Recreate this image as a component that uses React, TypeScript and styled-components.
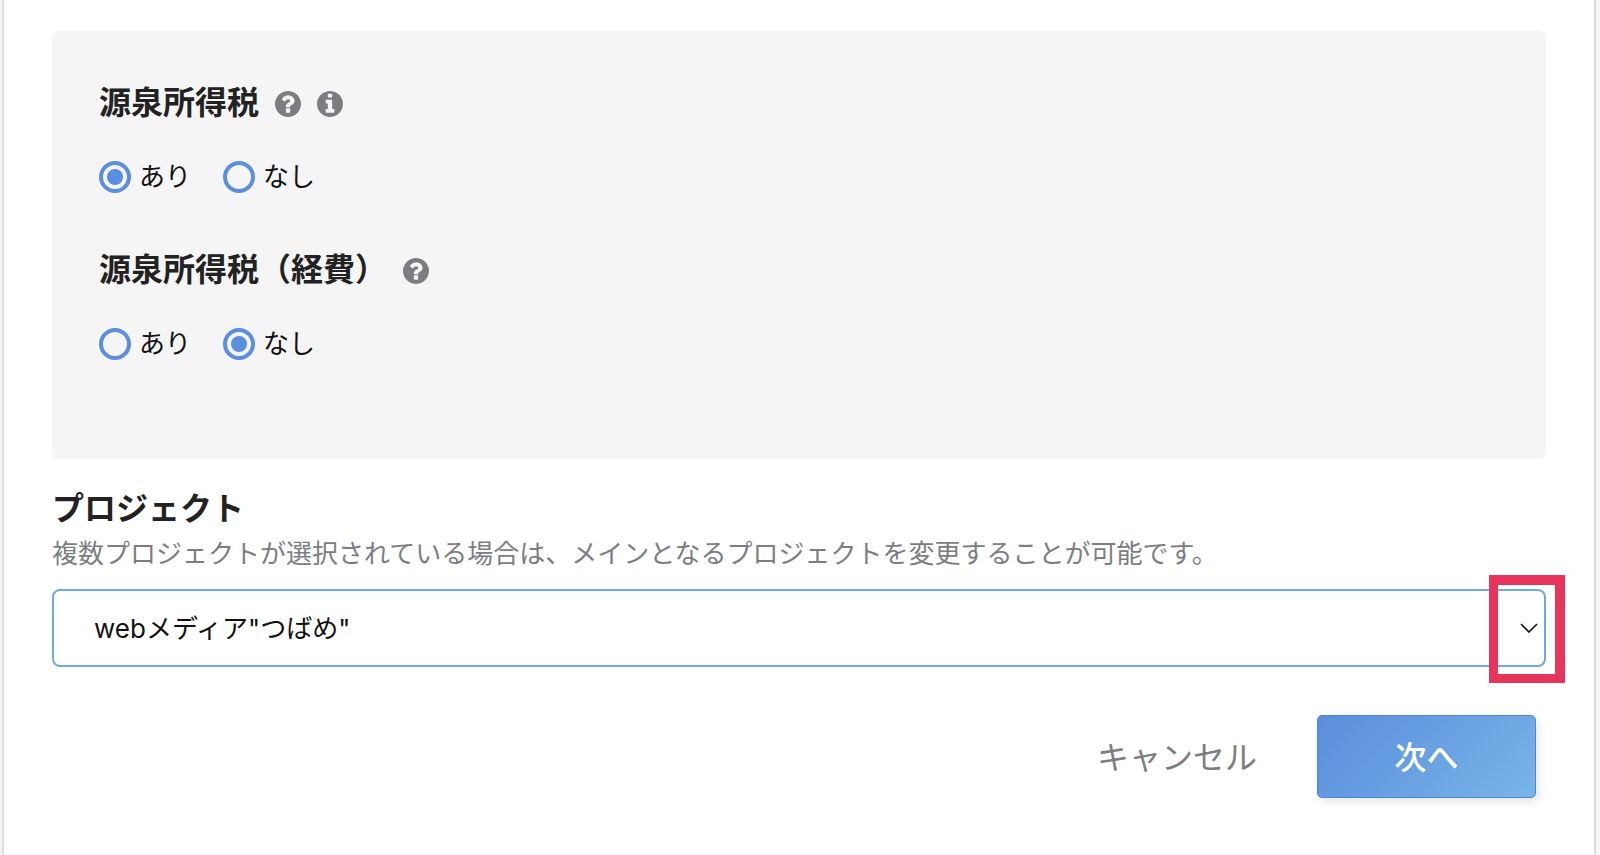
import React, { useState } from "react";
import styled, { createGlobalStyle } from "styled-components";

const GlobalStyle = createGlobalStyle`
  *, *::before, *::after { box-sizing: border-box; }
  body {
    margin: 0;
    background: #f5f6fa;
    color: #222;
    font-family: Inter, "Noto Sans CJK JP", sans-serif;
  }
  button, input, select { font: inherit; }
`;

const Card = styled.main`
  min-height: 100vh;
  margin: 0 4px 0 2px;
  padding: 31px 48px 56px;
  background: #fff;
  border: solid #dcdde0;
  border-width: 0 2px;
`;

const Panel = styled.section`
  display: flex;
  flex-direction: column;
  gap: 48px;
  padding: 48px 47px 94px;
  background: #f5f5f5;
  border-radius: 6px;
`;

const Group = styled.div`
  display: flex;
  flex-direction: column;
  gap: 29px;
`;

const TitleRow = styled.div`
  display: flex;
  align-items: center;
  gap: 16px;
`;

const Title = styled.h2`
  margin: 0;
  font-size: 32px;
  line-height: 48px;
  font-weight: 700;
`;

const IconButton = styled.button`
  display: flex;
  padding: 2px 0 0;
  border: 0;
  background: none;
  color: #7c7d82;
  cursor: pointer;
`;

const Icon = styled.svg`
  width: 26px;
  height: 26px;
  fill: currentColor;
`;

const Options = styled.div`
  display: flex;
  gap: 32px;
`;

const Option = styled.label`
  display: flex;
  align-items: center;
  gap: 8px;
  height: 42px;
  color: #111;
  font-size: 26px;
  line-height: 32px;
`;

const Radio = styled.input`
  appearance: none;
  display: grid;
  place-items: center;
  width: 32px;
  height: 32px;
  margin: 0;
  border: 4px solid #5a8edf;
  border-radius: 50%;

  &:checked::before {
    content: "";
    width: 16px;
    height: 16px;
    border-radius: 50%;
    background: #5a8edf;
  }
`;

const Field = styled.section`
  padding-top: 26px;
`;

const Description = styled.p`
  margin: 0;
  color: #7c7d82;
  font-size: 26px;
  line-height: 42px;
`;

const SelectBox = styled.div`
  position: relative;
  margin-top: 14px;
`;

const Select = styled.select`
  appearance: none;
  display: block;
  width: 100%;
  height: 78px;
  padding: 0 72px 0 40px;
  border: 2px solid #6ea8e6;
  border-radius: 8px;
  background: #fff;
  color: #111;
  font-size: 26px;
  outline: 0;
`;

const Chevron = styled.svg`
  position: absolute;
  top: 34px;
  right: 8px;
  width: 18px;
  height: 10px;
  pointer-events: none;
`;

const Highlight = styled.div`
  position: absolute;
  top: -14px;
  right: -19px;
  width: 76px;
  height: 108px;
  border: solid #e7345b;
  border-width: 10px 10px 9px 9px;
  pointer-events: none;
`;

const Actions = styled.footer`
  display: flex;
  justify-content: flex-end;
  gap: 60px;
  padding: 48px 10px 0 0;
`;

const Button = styled.button`
  padding: 0 0 4px;
  font-size: 32px;
  cursor: pointer;
`;

const CancelButton = styled(Button)`
  border: 0;
  background: none;
  color: #7c7d82;
`;

const NextButton = styled(Button)`
  width: 219px;
  height: 83px;
  border: 1px solid #4a86dd;
  border-radius: 5px;
  background: linear-gradient(135deg, #5b8ddc, #78b5e8);
  box-shadow: 3px 4px 10px rgba(0, 0, 0, 0.1);
  color: #fff;
  font-weight: 500;
`;

function QuestionIcon() {
  return (
    <Icon viewBox="128 128 1536 1536" aria-hidden="true">
      <path d="M1024 1376v-192q0-14-9-23t-23-9h-192q-14 0-23 9t-9 23v192q0 14 9 23t23 9h192q14 0 23-9t9-23zm256-672q0-88-55.5-163t-138.5-116-170-41q-243 0-371 213-15 24 8 42l132 100q7 6 19 6 16 0 25-12 53-68 86-92 34-24 86-24 48 0 85.5 26t37.5 59q0 38-20 61t-68 45q-63 28-115.5 86.5t-52.5 125.5v36q0 14 9 23t23 9h192q14 0 23-9t9-23q0-19 21.5-49.5t54.5-49.5q32-18 49-28.5t46-35 44.5-48 28-60.5 12.5-81zm384 192q0 209-103 385.5t-279.5 279.5-385.5 103-385.5-103-279.5-279.5-103-385.5 103-385.5 279.5-279.5 385.5-103 385.5 103 279.5 279.5 103 385.5z" />
    </Icon>
  );
}

function InfoIcon() {
  return (
    <Icon viewBox="128 128 1536 1536" aria-hidden="true">
      <path d="M1152 1376v-160q0-14-9-23t-23-9h-96v-512q0-14-9-23t-23-9h-320q-14 0-23 9t-9 23v160q0 14 9 23t23 9h96v320h-96q-14 0-23 9t-9 23v160q0 14 9 23t23 9h448q14 0 23-9t9-23zm-128-896v-160q0-14-9-23t-23-9h-192q-14 0-23 9t-9 23v160q0 14 9 23t23 9h192q14 0 23-9t9-23zm640 416q0 209-103 385.5t-279.5 279.5-385.5 103-385.5-103-279.5-279.5-103-385.5 103-385.5 279.5-279.5 385.5-103 385.5 103 279.5 279.5 103 385.5z" />
    </Icon>
  );
}

type TaxGroupProps = {
  title: string;
  name: string;
  initial: string;
  info?: boolean;
};

function TaxGroup({ title, name, initial, info }: TaxGroupProps) {
  const [value, setValue] = useState(initial);
  return (
    <Group role="radiogroup" aria-labelledby={`${name}-title`}>
      <TitleRow>
        <Title id={`${name}-title`}>{title}</Title>
        <IconButton type="button" aria-label="ヘルプ">
          <QuestionIcon />
        </IconButton>
        {info && (
          <IconButton type="button" aria-label="詳細">
            <InfoIcon />
          </IconButton>
        )}
      </TitleRow>
      <Options>
        {["あり", "なし"].map((choice) => (
          <Option key={choice}>
            <Radio
              type="radio"
              name={name}
              value={choice}
              checked={value === choice}
              onChange={() => setValue(choice)}
            />
            {choice}
          </Option>
        ))}
      </Options>
    </Group>
  );
}

export default function App() {
  return (
    <>
      <GlobalStyle />
      <Card lang="ja">
        <Panel>
          <TaxGroup title="源泉所得税" name="tax" initial="あり" info />
          <TaxGroup title="源泉所得税（経費）" name="expense-tax" initial="なし" />
        </Panel>
        <Field>
          <Title as="label" htmlFor="project">プロジェクト</Title>
          <Description id="project-note">
            複数プロジェクトが選択されている場合は、メインとなるプロジェクトを変更することが可能です。
          </Description>
          <SelectBox>
            <Select id="project" aria-describedby="project-note">
              <option>webメディア"つばめ"</option>
            </Select>
            <Chevron viewBox="0 0 18 10" fill="none" stroke="#111" strokeWidth="1.6" aria-hidden="true">
              <path d="M1 1l8 8 8-8" />
            </Chevron>
            <Highlight />
          </SelectBox>
        </Field>
        <Actions>
          <CancelButton type="button">キャンセル</CancelButton>
          <NextButton type="button">次へ</NextButton>
        </Actions>
      </Card>
    </>
  );
}
